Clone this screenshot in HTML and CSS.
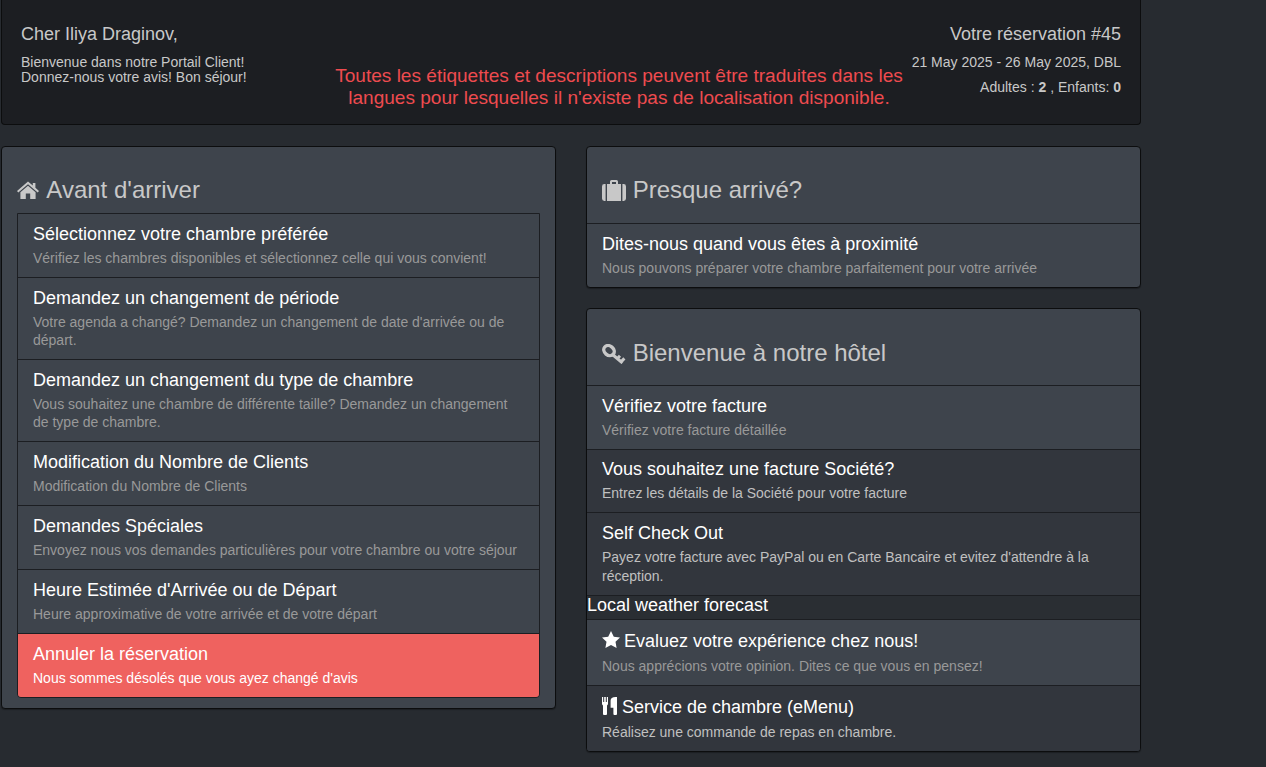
FILE: index.html
```html
<!DOCTYPE html>
<html lang="fr">

<head>
    <meta charset="utf-8">
    <title>Portail Client</title>
    <link rel="stylesheet" href="styles.css">
</head>

<body>
    <div class="container">
        <div class="welcome_panel">
            <div class="welcome_left">
                <div class="welcome_name">Cher Iliya Draginov,</div>
                <div class="welcome_text">Bienvenue dans notre Portail Client!<br>Donnez-nous votre avis! Bon séjour!</div>
            </div>
            <div class="welcome_notice">Toutes les étiquettes et descriptions peuvent être traduites dans les langues pour lesquelles il n'existe pas de localisation disponible.</div>
            <div class="welcome_right">
                <div class="booking_title">Votre réservation #45</div>
                <div class="booking_dates">21 May 2025 - 26 May 2025, DBL</div>
                <div class="booking_guests">Adultes : <b>2</b> , Enfants: <b>0</b></div>
            </div>
        </div>

        <div class="columns">
            <div class="column">
                <div class="panel panel_inset">
                    <h3 class="panel_title">
                        <svg class="title_icon icon_home" viewBox="0 0 22 18"><path d="M11 0.5 L15.8 4.6 V2 H18.4 V6.8 L22 9.9 L20.7 11.4 L11 3.2 L1.3 11.4 L0 9.9 Z M11 4.8 L18.6 11.2 V18 H13.2 V12.6 H8.8 V18 H3.4 V11.2 Z"/></svg>
                        Avant d'arriver
                    </h3>
                    <div class="list list_boxed">
                        <div class="item">
                            <div class="item_title">Sélectionnez votre chambre préférée</div>
                            <div class="item_text">Vérifiez les chambres disponibles et sélectionnez celle qui vous convient!</div>
                        </div>
                        <div class="item">
                            <div class="item_title">Demandez un changement de période</div>
                            <div class="item_text">Votre agenda a changé? Demandez un changement de date d'arrivée ou de départ.</div>
                        </div>
                        <div class="item">
                            <div class="item_title">Demandez un changement du type de chambre</div>
                            <div class="item_text">Vous souhaitez une chambre de différente taille? Demandez un changement de type de chambre.</div>
                        </div>
                        <div class="item">
                            <div class="item_title">Modification du Nombre de Clients</div>
                            <div class="item_text">Modification du Nombre de Clients</div>
                        </div>
                        <div class="item">
                            <div class="item_title">Demandes Spéciales</div>
                            <div class="item_text">Envoyez nous vos demandes particulières pour votre chambre ou votre séjour</div>
                        </div>
                        <div class="item">
                            <div class="item_title">Heure Estimée d'Arrivée ou de Départ</div>
                            <div class="item_text">Heure approximative de votre arrivée et de votre départ</div>
                        </div>
                        <div class="item item_danger">
                            <div class="item_title">Annuler la réservation</div>
                            <div class="item_text">Nous sommes désolés que vous ayez changé d'avis</div>
                        </div>
                    </div>
                </div>
            </div>

            <div class="column">
                <div class="panel">
                    <h3 class="panel_title panel_head">
                        <svg class="title_icon icon_case" viewBox="0 0 24 21"><path d="M8 4 V1.6 Q8 0 9.6 0 H14.4 Q16 0 16 1.6 V4 H14 V2 H10 V4 Z M5 4 H19 V21 H5 Z M3.6 4 V21 H2.4 Q0 21 0 18.6 V6.4 Q0 4 2.4 4 Z M20.4 4 H21.6 Q24 4 24 6.4 V18.6 Q24 21 21.6 21 H20.4 Z"/></svg>
                        Presque arrivé?
                    </h3>
                    <div class="list">
                        <div class="item">
                            <div class="item_title">Dites-nous quand vous êtes à proximité</div>
                            <div class="item_text">Nous pouvons préparer votre chambre parfaitement pour votre arrivée</div>
                        </div>
                    </div>
                </div>

                <div class="panel">
                    <h3 class="panel_title panel_head panel_head_low">
                        <svg class="title_icon icon_key" viewBox="0 0 24 20">
                            <ellipse class="key_ring" cx="7" cy="6.6" rx="5.6" ry="4.6" transform="rotate(40 7 6.6)"/>
                            <path class="key_blade" d="M10.5 10.5 L20.5 19 M15.4 14.6 L18 11.8 M19.2 17.6 L22.4 14.4"/>
                        </svg>
                        Bienvenue à notre hôtel
                    </h3>
                    <div class="list">
                        <div class="item">
                            <div class="item_title">Vérifiez votre facture</div>
                            <div class="item_text">Vérifiez votre facture détaillée</div>
                        </div>
                        <div class="item item_dark item_short">
                            <div class="item_title">Vous souhaitez une facture Société?</div>
                            <div class="item_text">Entrez les détails de la Société pour votre facture</div>
                        </div>
                        <div class="item item_dark item_loose">
                            <div class="item_title">Self Check Out</div>
                            <div class="item_text">Payez votre facture avec PayPal ou en Carte Bancaire et evitez d'attendre à la réception.</div>
                        </div>
                        <div class="weather">Local weather forecast</div>
                        <div class="item item_tall">
                            <div class="item_title">
                                <svg class="item_icon icon_star" viewBox="0 0 18 17"><path d="M9 0 L11.8 5.7 L18 6.5 L13.5 10.8 L14.6 17 L9 14 L3.4 17 L4.5 10.8 L0 6.5 L6.2 5.7 Z"/></svg>
                                Evaluez votre expérience chez nous!
                            </div>
                            <div class="item_text">Nous apprécions votre opinion. Dites ce que vous en pensez!</div>
                        </div>
                        <div class="item item_dark item_tall">
                            <div class="item_title">
                                <svg class="item_icon icon_food" viewBox="0 0 15 18"><path d="M0 0 H1.2 V5 H2.2 V0 H3.8 V5 H4.8 V0 H6 V6.6 Q6 8 5 8.6 V17 Q5 18 4 18 H2 Q1 18 1 17 V8.6 Q0 8 0 6.6 Z M8.6 3.6 Q8.6 0 13.6 0 H15 V17 Q15 18 14 18 H12.4 Q11.4 18 11.4 17 V10.8 H8.6 Z"/></svg>
                                Service de chambre (eMenu)
                            </div>
                            <div class="item_text">Réalisez une commande de repas en chambre.</div>
                        </div>
                    </div>
                </div>
            </div>
        </div>
    </div>
</body>

</html>
```

FILE: styles.css
```css
body {
    margin: 0;
    background-color: #272b30;
    color: #c8c8c8;
    font-family: "Liberation Sans", Arial, sans-serif;
    font-size: 14px;
}

.container {
    width: 1140px;
    margin-left: 1px;
}

.welcome_panel {
    display: flex;
    height: 125px;
    box-sizing: border-box;
    padding: 0 19px;
    background-color: #1c1e22;
    border: 1px solid #0c0d0e;
    border-top: none;
    border-radius: 0 0 4px 4px;
}

.welcome_left {
    width: 313px;
    padding-top: 24px;
}

.welcome_name {
    font-size: 18px;
    line-height: 20px;
}

.welcome_text {
    margin-top: 11px;
    font-size: 14px;
    line-height: 15px;
}

.welcome_notice {
    width: 570px;
    padding-top: 65px;
    font-size: 19.06px;
    line-height: 22px;
    text-align: center;
    color: #ee4b4f;
}

.welcome_right {
    flex: 1;
    padding-top: 24px;
    text-align: right;
}

.booking_title {
    font-size: 18px;
    line-height: 20px;
}

.booking_dates {
    margin-top: 8px;
    line-height: 20px;
}

.booking_guests {
    margin-top: 5px;
    line-height: 20px;
}

.columns {
    display: flex;
    gap: 30px;
    margin-top: 21px;
}

.column {
    width: 555px;
}

.panel {
    margin-bottom: 20px;
    background-color: #3e444c;
    border: 1px solid #0c0d0e;
    border-radius: 4px;
    box-shadow: 0 1px 1px rgba(0, 0, 0, .3);
    overflow: hidden;
}

.panel_inset {
    padding: 30px 15px 10px;
}

.panel_title {
    margin: 0 0 10px;
    font-size: 24px;
    font-weight: 400;
    line-height: 26px;
    color: #c8c8c8;
}

.panel_head {
    margin: 0;
    padding: 30px 15px 20px;
}

.panel_head_low {
    padding: 31px 15px 19px;
}

.title_icon {
    fill: #c8c8c8;
    vertical-align: -2px;
}

.icon_home {
    width: 22px;
    height: 18px;
    margin-right: 2px;
    vertical-align: -1px;
}

.icon_case {
    width: 24px;
    height: 21px;
    vertical-align: -3px;
}

.icon_key {
    width: 24px;
    height: 20px;
    vertical-align: -3px;
}

.key_ring {
    fill: none;
    stroke: #c8c8c8;
    stroke-width: 3.4;
}

.key_blade {
    fill: none;
    stroke: #c8c8c8;
    stroke-width: 3;
}

.list_boxed {
    border: 1px solid #1c1e22;
    border-radius: 0 0 4px 4px;
    overflow: hidden;
}

.item {
    padding: 10px 15px;
    border-top: 1px solid #1c1e22;
}

.list_boxed .item:first-child {
    border-top: none;
}

.item_title {
    margin-bottom: 5px;
    font-size: 18px;
    line-height: 20px;
    color: #fff;
}

.item_text {
    line-height: 18px;
    color: #999;
}

.item_dark {
    background-color: #32363d;
}

.item_dark .item_text {
    color: #c0c0c0;
}

.item_short {
    padding-top: 9px;
}

.item_loose .item_text {
    line-height: 18.5px;
}

.item_tall {
    padding: 11px 15px 10px;
}

.item_tall .item_title {
    margin-bottom: 6px;
}

.item_danger {
    background-color: #ef625f;
}

.item_danger .item_title,
.item_danger .item_text {
    color: #fff;
}

.item_icon {
    fill: #fff;
    vertical-align: -1px;
}

.icon_star {
    width: 18px;
    height: 17px;
    margin-right: -1px;
}

.icon_food {
    width: 15px;
    height: 18px;
    vertical-align: -2px;
}

.weather {
    height: 23px;
    background-color: #2a2e33;
    border-top: 1px solid #1c1e22;
    font-size: 18px;
    line-height: 18px;
    color: #fff;
}
```
